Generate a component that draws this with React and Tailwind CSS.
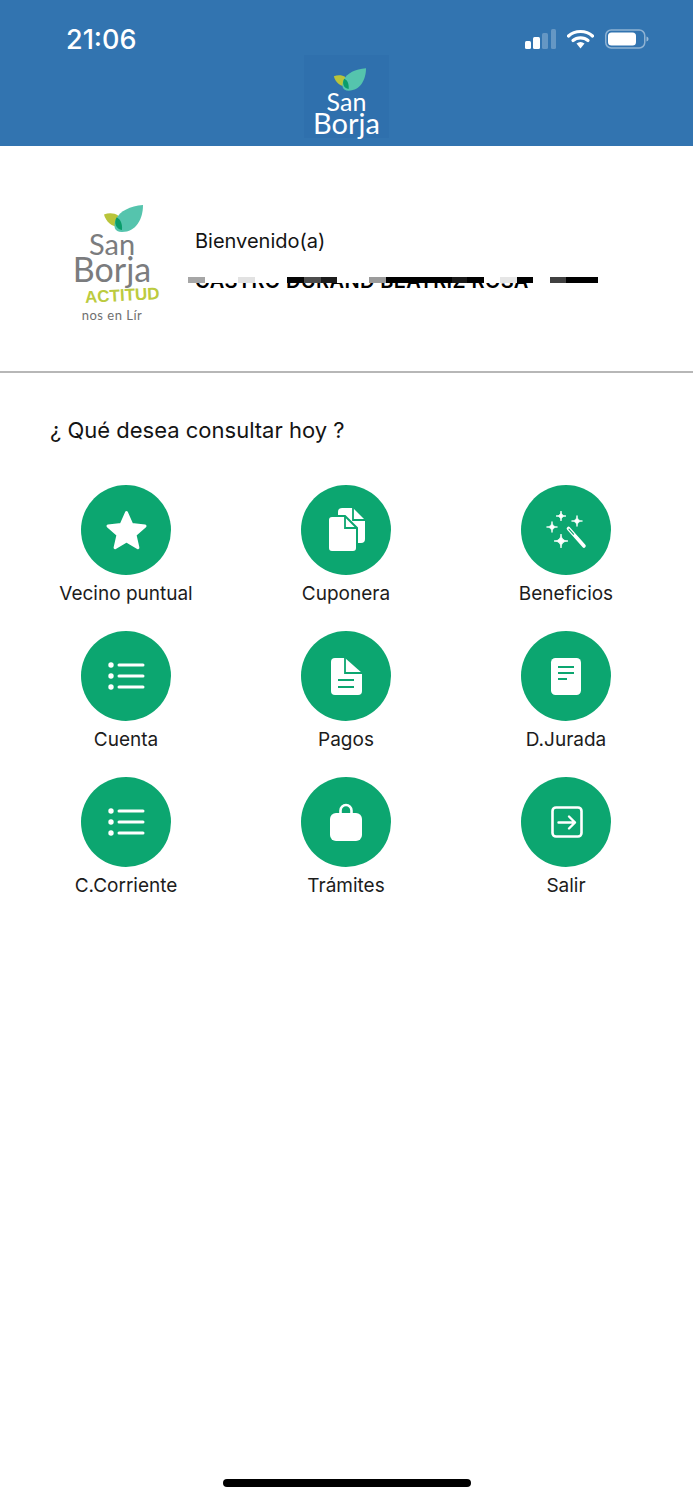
import React from "react";

// Four-point sparkle used by the wand icon
const sparkle = (x, y, r) =>
  `M${x} ${y - r}Q${x} ${y} ${x + r} ${y}Q${x} ${y} ${x} ${y + r}Q${x} ${y} ${x - r} ${y}Q${x} ${y} ${x} ${y - r}Z`;

const GREEN = "#0ca670";

const StarIcon = () => (
  <path
    d="M45.5 27.5L50.8 39.6L64 41L54 49.8L56.9 62.7L45.5 56L34.1 62.7L37 49.8L27 41L40.2 39.6Z"
    fill="#fff"
    stroke="#fff"
    strokeWidth="3"
    strokeLinejoin="round"
  />
);

const CopiesIcon = () => (
  <>
    <path d="M41 23H52L64 35V54a4 4 0 0 1-4 4H41a4 4 0 0 1-4-4V27a4 4 0 0 1 4-4Z" fill="#fff" />
    <path d="M52 23V35H64" fill="none" stroke={GREEN} strokeWidth="1.8" />
    <path
      d="M31 31H44L56 43V63a4 4 0 0 1-4 4H31a4 4 0 0 1-4-4V35a4 4 0 0 1 4-4Z"
      fill="#fff"
      stroke={GREEN}
      strokeWidth="2"
    />
    <path d="M44 31V43H56" fill="none" stroke={GREEN} strokeWidth="1.8" />
  </>
);

const WandIcon = () => (
  <>
    <path d={sparkle(40, 31, 5)} fill="#fff" stroke="#fff" strokeWidth="0.8" />
    <path d={sparkle(56, 36, 5.5)} fill="#fff" stroke="#fff" strokeWidth="0.8" />
    <path d={sparkle(31, 42, 5.5)} fill="#fff" stroke="#fff" strokeWidth="0.8" />
    <path d={sparkle(40, 56, 7)} fill="#fff" stroke="#fff" strokeWidth="0.8" />
    <path d="M47.5 43.5L63 61" stroke="#fff" strokeWidth="3.6" strokeLinecap="round" />
    <path d="M48 44.2L52.5 49.2" stroke={GREEN} strokeWidth="1.2" strokeLinecap="round" />
  </>
);

const ListIcon = () => (
  <>
    {[34, 45, 56].map((y) => (
      <g key={y}>
        <circle cx="30" cy={y} r="2.7" fill="#fff" />
        <path d={`M38 ${y}H62`} stroke="#fff" strokeWidth="3" strokeLinecap="round" />
      </g>
    ))}
  </>
);

const PaymentIcon = () => (
  <>
    <path d="M34 27H44L61 42V60a4 4 0 0 1-4 4H34a4 4 0 0 1-4-4V31a4 4 0 0 1 4-4Z" fill="#fff" />
    <path d="M44 27V42H61" fill="none" stroke={GREEN} strokeWidth="1.8" />
    <path d="M37 49H53M37 56H53" stroke={GREEN} strokeWidth="2.2" />
  </>
);

const SheetIcon = () => (
  <>
    <rect x="30" y="27" width="30" height="37" rx="4.5" fill="#fff" />
    <path d="M37 36H53M37 42H53M37 48H46" stroke={GREEN} strokeWidth="2.2" />
  </>
);

const BagIcon = () => (
  <>
    <path d="M39.5 38V33.5a5.5 5.5 0 0 1 11 0V38" fill="none" stroke="#fff" strokeWidth="2.6" />
    <rect x="29" y="36" width="32" height="28" rx="6" fill="#fff" />
  </>
);

const ExitIcon = () => (
  <>
    <rect x="31.5" y="30.5" width="29" height="29" rx="3.5" fill="none" stroke="#fff" strokeWidth="2.6" />
    <path
      d="M37.5 45.5H54M48 39.5L54 45.5L48 51.5"
      fill="none"
      stroke="#fff"
      strokeWidth="2.4"
      strokeLinecap="round"
      strokeLinejoin="round"
    />
  </>
);

const MENU = [
  { label: "Vecino puntual", icon: <StarIcon /> },
  { label: "Cuponera", icon: <CopiesIcon /> },
  { label: "Beneficios", icon: <WandIcon /> },
  { label: "Cuenta", icon: <ListIcon /> },
  { label: "Pagos", icon: <PaymentIcon /> },
  { label: "D.Jurada", icon: <SheetIcon /> },
  { label: "C.Corriente", icon: <ListIcon /> },
  { label: "Trámites", icon: <BagIcon /> },
  { label: "Salir", icon: <ExitIcon /> },
];

// Mosaic strip that hides the upper part of the citizen's name
const MOSAIC = [
  ["w-[17px]", "bg-[#a6a6a6]"],
  ["w-[33px]", "bg-white"],
  ["w-[17px]", "bg-[#e2e2e2]"],
  ["w-[32px]", "bg-white"],
  ["w-[17px]", "bg-[#050505]"],
  ["w-[17px]", "bg-[#4d4d4d]"],
  ["w-[16px]", "bg-[#1c1c1c]"],
  ["w-[32px]", "bg-white"],
  ["w-[17px]", "bg-[#9b9b9b]"],
  ["w-[66px]", "bg-black"],
  ["w-[15px]", "bg-[#1a1a1a]"],
  ["w-[17px]", "bg-black"],
  ["w-[16px]", "bg-white"],
  ["w-[17px]", "bg-[#e6e6e6]"],
  ["w-[16px]", "bg-black"],
  ["w-[17px]", "bg-white"],
  ["w-[16px]", "bg-[#404040]"],
  ["w-[32px]", "bg-black"],
];

const Leaves = ({ className }) => (
  <svg viewBox="0 0 40 27" className={className}>
    <path d="M1 9.5C6 7.5 11.5 8 15 10.5L16 22C9 22 3 17 1 9.5Z" fill="#b9c43a" />
    <path d="M40 0C40 14 33 27 19 27C11 27 10 21 13 14C17 6 27 1 40 0Z" fill="#55c4ad" />
    <path d="M13.5 12.5C17 13.5 19.5 18 19 25C13 24 10.5 18 13.5 12.5Z" fill="#0a9c6a" />
  </svg>
);

export default function App() {
  return (
    <div className="flex h-[1500px] w-[693px] flex-col overflow-hidden bg-white font-['Inter',sans-serif] text-[#141414]">
      <header className="h-[146px] shrink-0 bg-[#3274b0]">
        <div className="flex h-[55px] items-start justify-between pl-[66px] pr-[44px] pt-[24px]">
          <span className="text-[27px] font-medium leading-[32px] text-white">21:06</span>
          <div className="mt-[5px] flex items-center gap-[11px]">
            <svg width="31" height="20" viewBox="0 0 31 20">
              <rect x="0" y="12" width="6" height="8" rx="1.5" fill="#fff" />
              <rect x="8" y="8" width="7" height="12" rx="1.5" fill="#fff" />
              <rect x="17" y="4" width="6" height="16" rx="1.5" fill="#fff" fillOpacity="0.25" />
              <rect x="26" y="0" width="5" height="20" rx="1.5" fill="#fff" fillOpacity="0.25" />
            </svg>
            <svg width="27" height="20" viewBox="0 0 27 20">
              <path d="M1.5 7C8 1 19 1 25.5 7" fill="none" stroke="#fff" strokeWidth="3.2" strokeLinecap="round" />
              <path d="M6 11.5C10 8 17 8 21 11.5" fill="none" stroke="#fff" strokeWidth="3.2" strokeLinecap="round" />
              <path d="M9.5 14.5C12 12.5 15 12.5 17.5 14.5L13.5 19.5Z" fill="#fff" />
            </svg>
            <svg width="44" height="20" viewBox="0 0 44 20">
              <rect x="0.75" y="1" width="39" height="18" rx="5.5" fill="none" stroke="#fff" strokeOpacity="0.45" strokeWidth="1.5" />
              <rect x="3" y="3.5" width="28" height="13" rx="3.5" fill="#fff" />
              <path d="M41.5 7.5c1.5 .5 2 1.5 2 2.5s-.5 2-2 2.5Z" fill="#fff" fillOpacity="0.5" />
            </svg>
          </div>
        </div>
        <div className="mx-auto flex h-[83px] w-[85px] flex-col items-center bg-[#2f70ad] pt-[12px] font-['Lato',sans-serif] text-white">
          <Leaves className="ml-[5px] h-[25px] w-[33px] shrink-0" />
          <span className="-mt-[3px] text-[25px] leading-[25px]">San</span>
          <span className="-mt-[6px] text-[29px] leading-[29px]">Borja</span>
        </div>
      </header>

      <section className="flex h-[225px] shrink-0 items-start">
        <div className="ml-[73px] mt-[59px] flex w-[78px] flex-col items-center font-['Lato',sans-serif] text-[#7b7c7e]">
          <Leaves className="ml-[22px] h-[27px] w-[40px] shrink-0" />
          <span className="mt-[-2px] text-[29px] leading-[27px]">San</span>
          <span className="-mt-[4px] text-[34px] leading-[32px]">Borja</span>
          <span className="ml-[20px] mt-[1px] -rotate-3 font-['Liberation_Sans',sans-serif] text-[17px] font-bold leading-[20px] tracking-[0px] text-[#bccb3f] [transform-origin:center]">
            ACTITUD
          </span>
          <span className="mt-[1px] h-[16px] w-[64px] overflow-hidden whitespace-nowrap text-center text-[13px] leading-[16px] tracking-[0.5px] text-[#6f6f6f]">
            nos en Lír
          </span>
        </div>
        <div className="ml-[44px] mt-[81px] flex flex-col">
          <span className="text-[20px] leading-[28px]">Bienvenido(a)</span>
          <div className="-ml-[7px] mt-[22px] flex h-[6px]">
            {MOSAIC.map(([w, bg], i) => (
              <span key={i} className={`${w} ${bg}`} />
            ))}
          </div>
          <div className="h-[7px] overflow-hidden">
            <p className="-mt-[14px] whitespace-nowrap text-[20px] font-semibold leading-[24px] tracking-[0.4px] text-black">
              CASTRO DURAND BEATRIZ ROSA
            </p>
          </div>
        </div>
      </section>

      <div className="h-[2px] shrink-0 bg-[#b7b7b7]" />

      <main className="flex flex-1 flex-col">
        <h1 className="ml-[50px] mt-[43px] text-[22px] font-normal leading-[28px]">¿ Qué desea consultar hoy ?</h1>
        <div className="ml-[16px] mt-[41px] grid w-[660px] grid-cols-3 gap-y-[25px]">
          {MENU.map(({ label, icon }) => (
            <div key={label} className="flex flex-col items-center">
              <div className="h-[90px] w-[90px] rounded-full bg-[#0ca670]">
                <svg width="90" height="90" viewBox="0 0 90 90">
                  {icon}
                </svg>
              </div>
              <span className="mt-[7px] text-[19px] leading-[24px] text-[#1c1c1c]">{label}</span>
            </div>
          ))}
        </div>
      </main>

      <div className="mb-[13px] mx-auto h-[8px] w-[248px] rounded-full bg-black" />
    </div>
  );
}
